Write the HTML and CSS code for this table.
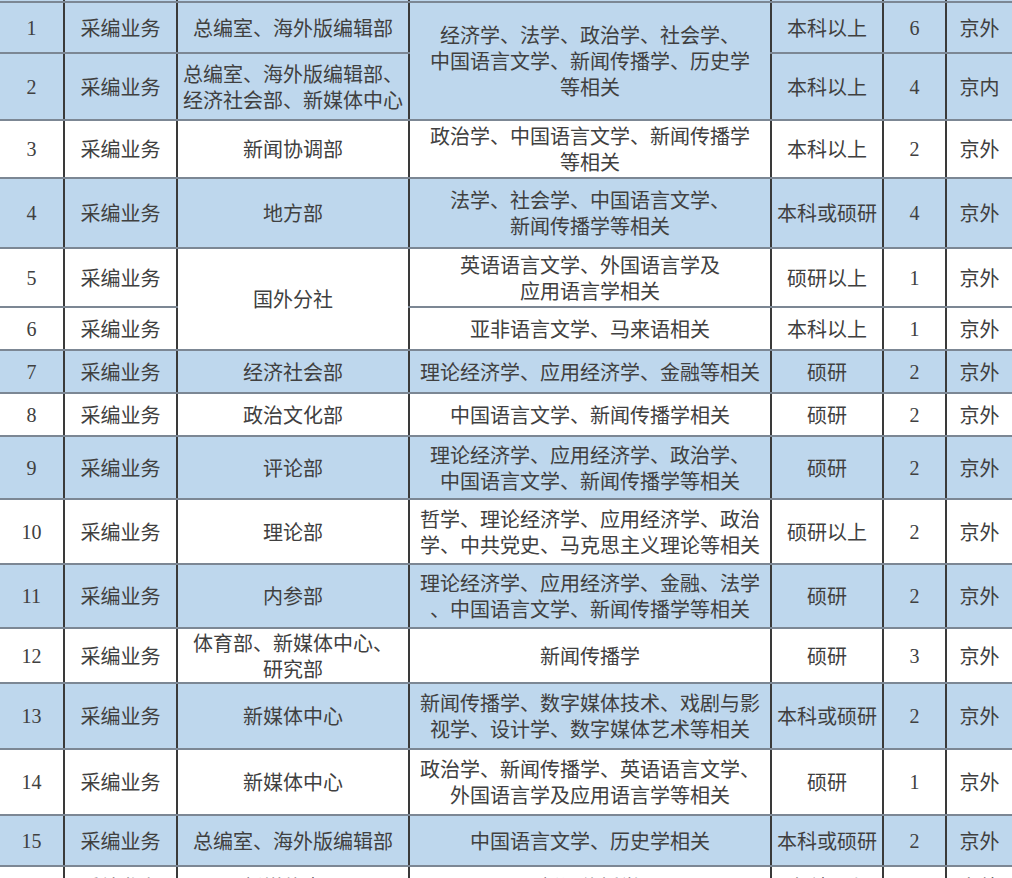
FILE: index.html
```html
<!DOCTYPE html>
<html lang="zh-CN">
<head>
<meta charset="utf-8">
<title>招聘岗位表</title>
<link rel="stylesheet" href="styles.css">
</head>
<body>
<table class="jobs">
  <colgroup>
    <col class="c-no"><col class="c-type"><col class="c-dept"><col class="c-major"><col class="c-edu"><col class="c-num"><col class="c-loc">
  </colgroup>
  <tbody>
    <tr class="r0 blue"><td></td><td></td><td></td><td></td><td></td><td></td><td></td></tr>
    <tr class="r1 blue">
      <td class="num">1</td><td>采编业务</td><td>总编室、海外版编辑部</td>
      <td rowspan="2">经济学、法学、政治学、社会学、<br>中国语言文学、新闻传播学、历史学<br>等相关</td>
      <td>本科以上</td><td class="num">6</td><td>京外</td>
    </tr>
    <tr class="r2 blue">
      <td class="num">2</td><td>采编业务</td><td>总编室、海外版编辑部、<br>经济社会部、新媒体中心</td>
      <td>本科以上</td><td class="num">4</td><td>京内</td>
    </tr>
    <tr class="r3">
      <td class="num">3</td><td>采编业务</td><td>新闻协调部</td>
      <td>政治学、中国语言文学、新闻传播学<br>等相关</td>
      <td>本科以上</td><td class="num">2</td><td>京外</td>
    </tr>
    <tr class="r4 blue">
      <td class="num">4</td><td>采编业务</td><td>地方部</td>
      <td>法学、社会学、中国语言文学、<br>新闻传播学等相关</td>
      <td>本科或硕研</td><td class="num">4</td><td>京外</td>
    </tr>
    <tr class="r5">
      <td class="num">5</td><td>采编业务</td><td rowspan="2">国外分社</td>
      <td>英语语言文学、外国语言学及<br>应用语言学相关</td>
      <td>硕研以上</td><td class="num">1</td><td>京外</td>
    </tr>
    <tr class="r6">
      <td class="num">6</td><td>采编业务</td>
      <td>亚非语言文学、马来语相关</td>
      <td>本科以上</td><td class="num">1</td><td>京外</td>
    </tr>
    <tr class="r7 blue">
      <td class="num">7</td><td>采编业务</td><td>经济社会部</td>
      <td>理论经济学、应用经济学、金融等相关</td>
      <td>硕研</td><td class="num">2</td><td>京外</td>
    </tr>
    <tr class="r8">
      <td class="num">8</td><td>采编业务</td><td>政治文化部</td>
      <td>中国语言文学、新闻传播学相关</td>
      <td>硕研</td><td class="num">2</td><td>京外</td>
    </tr>
    <tr class="r9 blue">
      <td class="num">9</td><td>采编业务</td><td>评论部</td>
      <td>理论经济学、应用经济学、政治学、<br>中国语言文学、新闻传播学等相关</td>
      <td>硕研</td><td class="num">2</td><td>京外</td>
    </tr>
    <tr class="r10">
      <td class="num">10</td><td>采编业务</td><td>理论部</td>
      <td>哲学、理论经济学、应用经济学、政治<br>学、中共党史、马克思主义理论等相关</td>
      <td>硕研以上</td><td class="num">2</td><td>京外</td>
    </tr>
    <tr class="r11 blue">
      <td class="num">11</td><td>采编业务</td><td>内参部</td>
      <td>理论经济学、应用经济学、金融、法学<br>、中国语言文学、新闻传播学等相关</td>
      <td>硕研</td><td class="num">2</td><td>京外</td>
    </tr>
    <tr class="r12">
      <td class="num">12</td><td>采编业务</td><td>体育部、新媒体中心、<br>研究部</td>
      <td>新闻传播学</td>
      <td>硕研</td><td class="num">3</td><td>京外</td>
    </tr>
    <tr class="r13 blue">
      <td class="num">13</td><td>采编业务</td><td>新媒体中心</td>
      <td>新闻传播学、数字媒体技术、戏剧与影<br>视学、设计学、数字媒体艺术等相关</td>
      <td>本科或硕研</td><td class="num">2</td><td>京外</td>
    </tr>
    <tr class="r14">
      <td class="num">14</td><td>采编业务</td><td>新媒体中心</td>
      <td>政治学、新闻传播学、英语语言文学、<br>外国语言学及应用语言学等相关</td>
      <td>硕研</td><td class="num">1</td><td>京外</td>
    </tr>
    <tr class="r15 blue">
      <td class="num">15</td><td>采编业务</td><td>总编室、海外版编辑部</td>
      <td>中国语言文学、历史学相关</td>
      <td>本科或硕研</td><td class="num">2</td><td>京外</td>
    </tr>
    <tr class="r16">
      <td class="num">16</td><td>采编业务</td><td>新媒体中心</td>
      <td>新闻传播学</td>
      <td>本科以上</td><td class="num">1</td><td>京外</td>
    </tr>
  </tbody>
</table>
</body>
</html>
```

FILE: styles.css
```css
html, body {
  margin: 0;
  padding: 0;
  background: #ffffff;
  overflow: hidden;
}

.jobs {
  border-collapse: collapse;
  table-layout: fixed;
  width: 1012px;
  font-family: "Noto Sans CJK SC", "Noto Sans CJK TC", sans-serif;
  font-size: 20px;
  line-height: 26px;
  color: #404040;
}

.c-no { width: 64px; }
.c-type { width: 113px; }
.c-dept { width: 232px; }
.c-major { width: 362px; }
.c-edu { width: 112px; }
.c-num { width: 63px; }
.c-loc { width: 66px; }

.jobs td {
  padding: 0;
  text-align: center;
  vertical-align: middle;
  white-space: nowrap;
  border-left: 2px solid #3a3a3a;
  border-bottom: 2px solid #7c8794;
  background: #ffffff;
}

.jobs td:first-child { border-left: none; }

.jobs tr.blue td { background: #bed7ed; }

.jobs td.num {
  font-family: "Liberation Serif", "DejaVu Serif", serif;
  font-size: 20px;
}

.r0 td { height: 1px; }
.r1 td { height: 49px; }
.r2 td { height: 65px; }
.r3 td { height: 56px; }
.r4 td { height: 68px; }
.r5 td { height: 57px; }
.r6 td { height: 41px; }
.r7 td { height: 41px; }
.r8 td { height: 41px; }
.r9 td { height: 61px; }
.r10 td { height: 63px; }
.r11 td { height: 62px; }
.r12 td { height: 53px; }
.r13 td { height: 64px; }
.r14 td { height: 64px; }
.r15 td { height: 49px; }
.r16 td { height: 40px; }
```
